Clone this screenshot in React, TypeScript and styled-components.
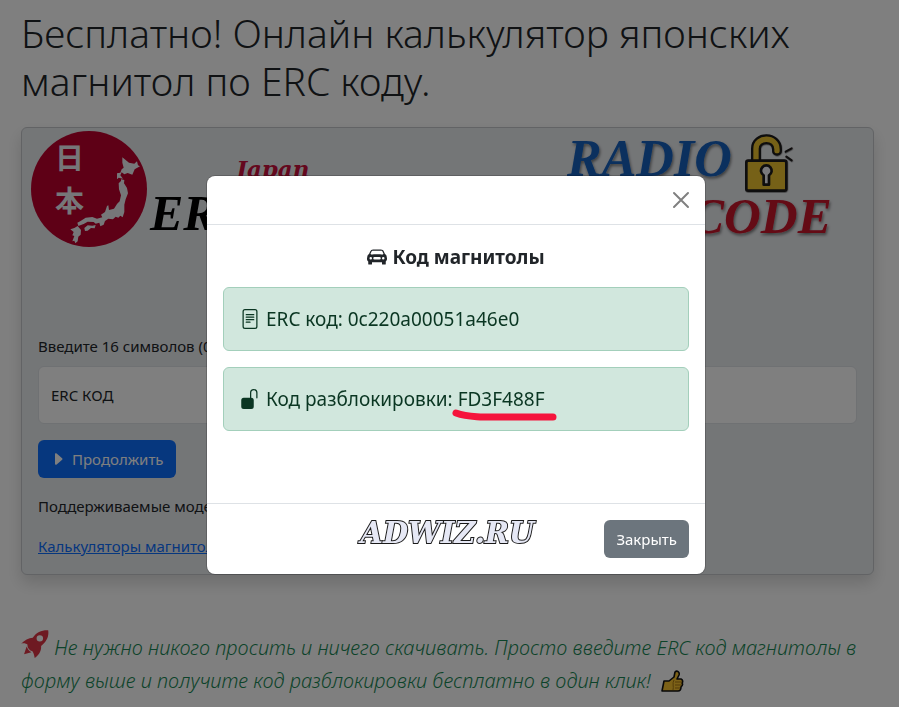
import React from "react";
import styled, { createGlobalStyle } from "styled-components";
import { BsCarFrontFill, BsFileText, BsUnlockFill, BsCaretRightFill } from "react-icons/bs";

const GlobalStyle = createGlobalStyle`
  *, *::before, *::after { box-sizing: border-box; }
  body {
    margin: 0;
    background: #fff;
    color: #212529;
    font: 400 15px/24px "Noto Sans", "Open Sans", sans-serif;
    overflow: hidden;
  }
  button, input { font: inherit; }
`;

const Page = styled.main`
  padding: 9px 25px 0 21px;
`;

const Heading = styled.h1`
  margin: 0 0 22px;
  font-size: 39px;
  font-weight: 300;
  line-height: 48px;
`;

const Card = styled.section`
  min-height: 448px;
  background: #e9ecef;
  border: 1px solid #c4c7cb;
  border-radius: 6px;
  box-shadow: 0 8px 16px rgba(0, 0, 0, 0.15);
  overflow: hidden;
`;

const Banner = styled.svg`
  display: block;
  height: 120px;
  width: 100%;
`;

const Form = styled.form`
  display: flex;
  flex-direction: column;
  align-items: flex-start;
  gap: 16px;
  padding: 86px 16px 14px;
`;

const Field = styled.div`
  display: grid;
  gap: 8px;
  width: 100%;
`;

const CodeInput = styled.input`
  width: 100%;
  height: 58px;
  padding: 0 12px;
  border: 1px solid #dee2e6;
  border-radius: 6px;
  background: #fff;
  color: #212529;
  &::placeholder { color: #212529; opacity: 1; }
`;

const Button = styled.button<{ $tone: "primary" | "secondary" }>`
  display: inline-flex;
  align-items: center;
  gap: 6px;
  height: 38px;
  padding: 0 12px;
  border: 0;
  border-radius: 6px;
  color: #fff;
  background: ${(p) => (p.$tone === "primary" ? "#0d6efd" : "#6c757d")};
`;

const Text = styled.p`
  margin: 0;
`;

const Link = styled.a`
  color: #0d6efd;
`;

const Note = styled.p`
  margin: 55px 0 0;
  color: #198754;
  font-size: 20px;
  font-weight: 300;
  font-style: italic;
  line-height: 33px;
`;

const Rocket = styled.svg`
  width: 28px;
  height: 28px;
  vertical-align: -3px;
`;

const Thumb = styled.svg`
  width: 24px;
  height: 24px;
  margin-left: 4px;
  vertical-align: -6px;
`;

const Backdrop = styled.div`
  position: fixed;
  inset: 0;
  display: flex;
  justify-content: center;
  align-items: flex-start;
  padding: 176px 0 0 13px;
  background: rgba(0, 0, 0, 0.5);
`;

const Dialog = styled.div`
  width: 100%;
  max-width: 498px;
  background: #fff;
  border-radius: 8px;
  box-shadow: 0 0 0 1px rgba(0, 0, 0, 0.18);
`;

const DialogHeader = styled.header`
  display: flex;
  justify-content: flex-end;
  padding: 12px;
  border-bottom: 1px solid #dee2e6;
`;

const CloseButton = styled.button`
  display: grid;
  place-items: center;
  width: 24px;
  height: 24px;
  padding: 0;
  border: 0;
  background: none;
  color: #808080;
`;

const DialogBody = styled.div`
  display: grid;
  align-content: start;
  gap: 14px;
  min-height: 278px;
  padding: 16px;
`;

const DialogTitle = styled.h2`
  display: flex;
  justify-content: center;
  align-items: center;
  gap: 5px;
  margin: 0;
  font-size: 19px;
  line-height: 32px;
  font-weight: 700;
`;

const Alerts = styled.div`
  display: grid;
  gap: 16px;
`;

const Alert = styled.div`
  display: flex;
  align-items: center;
  gap: 6px;
  height: 64px;
  padding: 0 16px;
  border: 1px solid #a3cfbb;
  border-radius: 6px;
  background: #d1e7dd;
  color: #0a3622;
  font-size: 19px;
`;

const Code = styled.span`
  position: relative;
`;

const Marker = styled.svg`
  position: absolute;
  left: -8px;
  bottom: -11px;
  width: 112px;
  height: 16px;
`;

const DialogFooter = styled.footer`
  display: flex;
  justify-content: flex-end;
  align-items: flex-start;
  gap: 70px;
  padding: 16px;
  border-top: 1px solid #dee2e6;
`;

const Watermark = styled.span`
  color: #e6e8f5;
  font-family: "DejaVu Serif", serif;
  font-size: 29px;
  font-weight: 700;
  font-style: italic;
  line-height: 26px;
  -webkit-text-stroke: 2px #1a1a1a;
  paint-order: stroke fill;
`;

function BannerArt() {
  return (
    <Banner viewBox="0 0 851 120" role="img" aria-label="Japan ERC Radio Code">
      <defs>
        <filter id="soft" x="-10%" y="-10%" width="120%" height="130%">
          <feDropShadow dx="1" dy="2" stdDeviation="1.5" floodOpacity="0.5" />
        </filter>
      </defs>
      <g transform="translate(-7 -8) scale(.33333)">
        <circle cx="222" cy="207" r="174" fill="#bc002d" />
        <g fill="#eceef2">
          <path d="M322 112L342 128L358 131L366 124L369 136L375 139L359 148L352 164L338 159L328 163L320 157L316 166L324 176L311 173L306 178V160L316 158L320 148L326 143L322 128Z" />
          <path d="M311 190L318 183V178L328 180L327 190L336 204L339 220L332 238L328 254L328 276L323 292L316 287L310 293L302 290L294 298L280 296L270 303L266 314L256 319L253 308L242 311L236 306L218 305L206 312L190 318L187 308L198 302L212 293L232 291L246 296L262 292L258 284L270 276L276 258L280 256L282 270L297 266L306 252L314 244L318 226L312 208Z" />
          <path d="M208 324L218 316L232 317L242 315L239 325L228 324L218 332L210 333Z" />
          <path d="M166 328L178 324L188 318L198 330L197 344L190 350L188 364L181 370L178 362L172 364L178 348L172 346L176 336Z" />
        </g>
      </g>
      <g fill="#eceef2" fontFamily='"Noto Sans CJK JP", sans-serif' fontWeight="700" fontSize="29">
        <text x="33" y="41">日</text>
        <text x="33" y="84">本</text>
      </g>
      <text x="214" y="49" fill="#c8103c" fontFamily='"DejaVu Serif", serif' fontWeight="700" fontStyle="italic" fontSize="23">Japan</text>
      <g fontFamily='"Liberation Serif", serif' fontWeight="700" fontStyle="italic">
        <text x="128" y="102" fontSize="50">ERC</text>
        <g filter="url(#soft)">
          <text x="545" y="48" fontSize="52" fill="#1560bd">RADIO</text>
          <text x="668" y="105" fontSize="51" fill="#c8142c">CODE</text>
        </g>
      </g>
      <g transform="translate(518 -8) scale(.33333)" strokeLinecap="round" strokeLinejoin="round" filter="url(#soft)">
        <path d="M648 128V86C648 48 711 48 711 88V92" fill="none" stroke="#1c1a1a" strokeWidth="30" />
        <path d="M648 128V86C648 48 711 48 711 88V92" fill="none" stroke="#ecc22e" strokeWidth="16" />
        <rect x="619" y="122" width="120" height="90" rx="6" fill="#ecc22e" stroke="#1c1a1a" strokeWidth="8" />
        <path d="M671 166A16 16 0 1 1 687 166V194H671Z" fill="#f4f4f8" stroke="#1c1a1a" strokeWidth="8" />
        <path d="M737 95L755 85M739 110L755 121" stroke="#1c1a1a" strokeWidth="6" />
      </g>
    </Banner>
  );
}

function RocketIcon() {
  return (
    <Rocket viewBox="0 0 86 87" aria-hidden="true" fill="#dc3545">
      <path fillRule="evenodd" d="M84 1C64 0 48 7 36 24C24 25 9 32 0 43C8 40 15 42 20 46C18 54 25 63 35 66C39 72 41 79 42 87C55 78 63 65 62 50C79 36 87 20 84 1ZM58 16A10 10 0 1 1 58 36A10 10 0 1 1 58 16Z" />
      <path d="M17 51L9 75L32 69C25 65 20 59 17 51Z" />
    </Rocket>
  );
}

function ThumbUp() {
  return (
    <Thumb viewBox="0 0 24 24" aria-hidden="true">
      <path d="M4 11H9L14 7L15 2C17 0 20 2 19 5L17 9H21C23 10 23 12 22 13C23 14 22 16 21 17C21 19 20 21 18 21H2Z" fill="#f9c22e" stroke="#111" strokeWidth="1.6" strokeLinejoin="round" />
      <path d="M15 12H22M15 15H21M15 18H20M14 10C12 13 14 17 13 20" fill="none" stroke="#a87812" strokeWidth="1" />
    </Thumb>
  );
}

export default function App() {
  return (
    <>
      <GlobalStyle />
      <Page>
        <Heading>Бесплатно! Онлайн калькулятор японских магнитол по ERC коду.</Heading>
        <Card>
          <BannerArt />
          <Form onSubmit={(e) => e.preventDefault()}>
            <Field>
              <label htmlFor="erc">Введите 16 символов (0-9, a-f)</label>
              <CodeInput id="erc" placeholder="ERC КОД" />
            </Field>
            <Button $tone="primary">
              <BsCaretRightFill size={16} aria-hidden="true" />
              Продолжить
            </Button>
            <Text>Поддерживаемые модели</Text>
            <Link href="#calculators">Калькуляторы магнитол</Link>
          </Form>
        </Card>
        <Note>
          <RocketIcon /> Не нужно никого просить и ничего скачивать. Просто введите ERC код магнитолы в
          форму выше и получите код разблокировки бесплатно в один клик! <ThumbUp />
        </Note>
      </Page>
      <Backdrop>
        <Dialog role="dialog" aria-modal="true" aria-labelledby="dialog-title">
          <DialogHeader>
            <CloseButton type="button" aria-label="Закрыть окно">
              <svg width="18" height="18" viewBox="0 0 18 18" aria-hidden="true">
                <path d="M2 2L16 16M16 2L2 16" stroke="currentColor" strokeWidth="2" strokeLinecap="round" />
              </svg>
            </CloseButton>
          </DialogHeader>
          <DialogBody>
            <DialogTitle id="dialog-title">
              <BsCarFrontFill size={20} aria-hidden="true" />
              Код магнитолы
            </DialogTitle>
            <Alerts>
              <Alert>
                <BsFileText size={20} aria-hidden="true" />
                <span>ERC код: 0c220a00051a46e0</span>
              </Alert>
              <Alert>
                <BsUnlockFill size={20} aria-hidden="true" />
                <span>
                  Код разблокировки:{" "}
                  <Code>
                    FD3F488F
                    <Marker viewBox="0 0 112 16" aria-hidden="true">
                      <path d="M6 6C20 11 40 10 60 10H103" fill="none" stroke="#f5143c" strokeWidth="7" strokeLinecap="round" />
                    </Marker>
                  </Code>
                </span>
              </Alert>
            </Alerts>
          </DialogBody>
          <DialogFooter>
            <Watermark>ADWIZ.RU</Watermark>
            <Button type="button" $tone="secondary">Закрыть</Button>
          </DialogFooter>
        </Dialog>
      </Backdrop>
    </>
  );
}
